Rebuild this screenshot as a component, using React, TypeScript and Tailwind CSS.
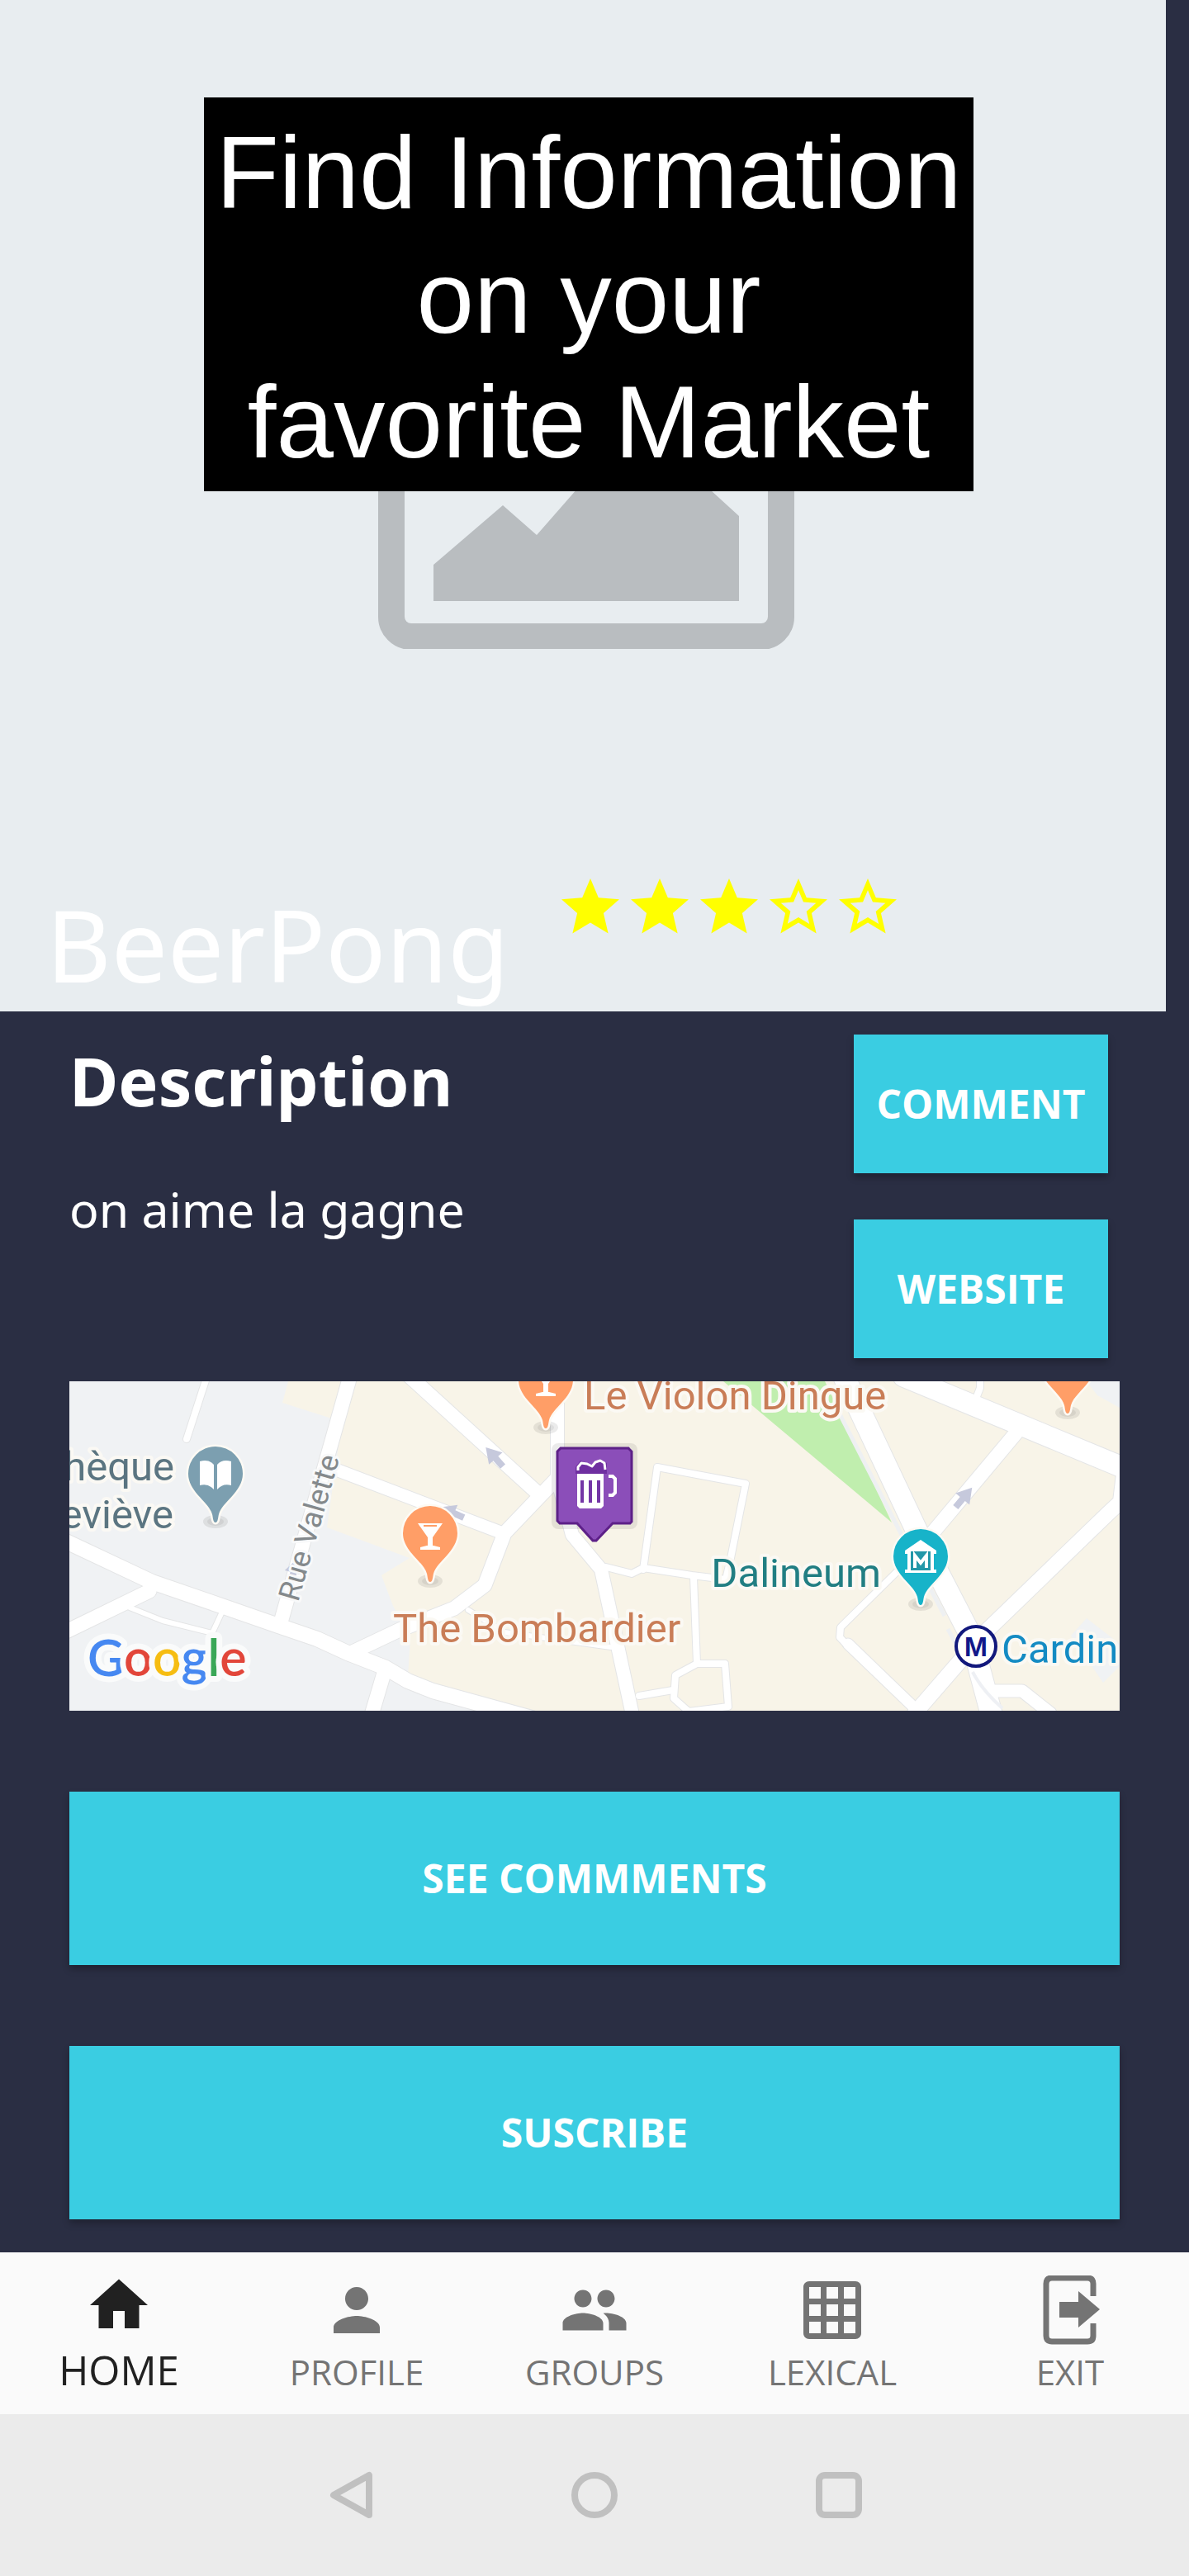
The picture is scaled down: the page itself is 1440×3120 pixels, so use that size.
import React from "react";
import {
  MdStar,
  MdStarBorder,
  MdHome,
  MdPerson,
  MdPeople,
  MdGridOn,
} from "react-icons/md";

const ROADS: { d: string; w: number }[] = [
  { d: "M166 -4 L142 70", w: 8 },
  { d: "M73 274 L113 290 L173 305 L187 275", w: 6 },
  { d: "M483 277 L527 304 L656 322", w: 6 },
  { d: "M695 228 L712 104 L819 124 L801 214 L795 240 L754 235 L695 226 L681 233 L650 225", w: 8 },
  { d: "M756 237 L760 342 L794 342 L798 394 L750 400 L732 384 L734 356 L760 342", w: 8 },
  { d: "M690 381 L731 374", w: 8 },
  { d: "M1003 230 L934 298 L933 310 L946 324", w: 8 },
  { d: "M943 318 L1024 396", w: 13 },
  { d: "M1103 -4 L1103 8 L1096 26", w: 8 },
  { d: "M340 -6 L256 292", w: 17 },
  { d: "M-6 304 L97 254", w: 17 },
  { d: "M382 350 L366 404", w: 17 },
  { d: "M323 107 L525 184", w: 15 },
  { d: "M412 -6 L570 138", w: 17 },
  { d: "M343 328 L400 301 L466 275 L503 247 L527 184 L570 139 L596 112", w: 17 },
  { d: "M591 -4 L591 118 L609 186 L644 228 L682 404", w: 16 },
  { d: "M-6 193 L100 243 L187 273 L256 297 L300 312 L337 329 L383 347 L410 363 L440 375 L560 408", w: 18 },
  { d: "M1147 62 L1045 184", w: 17 },
  { d: "M1278 104 L1273 146 L1258 160 L1108 305 L1024 402", w: 18 },
  { d: "M1110 375 L1154 375 L1188 402", w: 15 },
  { d: "M1010 -6 L1280 106", w: 25 },
  { d: "M938 -6 L1029 187 L1091 307 L1117 404", w: 26 },
];

function Pin({ x, y, color, children }: { x: number; y: number; color: string; children?: React.ReactNode }) {
  return (
    <g transform={`translate(${x} ${y})`}>
      <ellipse cx="0" cy="0" rx="15" ry="8" fill="#000" opacity="0.08" />
      <ellipse cx="0" cy="0" rx="10" ry="5" fill="#000" opacity="0.06" />
      <path
        d="M0 1 C-3 1 -3 -5 -4 -9 C-8 -24 -33 -36 -33 -58 A33 33 0 1 1 33 -58 C33 -36 8 -24 4 -9 C3 -5 3 1 0 1 Z"
        fill={color}
        stroke="#fdfaf4"
        strokeWidth="5"
        strokeLinejoin="round"
        style={{ paintOrder: "stroke" }}
      />
      {children}
    </g>
  );
}

function Martini() {
  return (
    <g>
      <path d="M-15 -70 H15 L3 -53 V-41 H-3 V-53 Z" fill="#fff" />
      <path d="M-8 -67 H8" stroke="#ff9e67" strokeWidth="2" />
      <path d="M-12 -38 V-41 L-4 -43 H4 L12 -41 V-38 Z" fill="#fff" />
    </g>
  );
}

function MapLabel({ x, y, fill, anchor = "start", children }: { x: number; y: number; fill: string; anchor?: "start" | "end"; children: string }) {
  return (
    <text
      x={x}
      y={y}
      fill={fill}
      textAnchor={anchor}
      className="font-[Roboto,sans-serif] text-[49px]"
      stroke="#fbf9f4"
      strokeWidth="8"
      strokeLinejoin="round"
      style={{ paintOrder: "stroke" }}
    >
      {children}
    </text>
  );
}

function DirectionArrow({ x, y, angle }: { x: number; y: number; angle: number }) {
  return (
    <path
      transform={`translate(${x} ${y}) rotate(${angle})`}
      d="M0 -16 L11 2 H4 V15 H-4 V2 H-11 Z"
      fill="#c6c9dc"
    />
  );
}

function VenueMap() {
  return (
    <svg viewBox="0 0 1272 399" preserveAspectRatio="xMidYMid slice" role="img" aria-label="Map around BeerPong" className="block w-full">
      <rect width="1272" height="399" fill="#f0f2f4" />
      <path d="M265 0 L258 26 L330 49 L312 177 L412 214 L378 235 L392 272 L413 310 L410 358 L540 399 H1272 V0 Z" fill="#f8f4e8" />
      <path d="M1232 0 H1272 V32 L1245 17 Z M1232 287 L1213 308 L1252 365 L1272 345 V318 Z" fill="#f0f2f4" />
      <path d="M792 0 H915 L940 52 L996 171 Z" fill="#c0eeae" />
      <path d="M928 30 L1010 190 M1042 250 L1060 284 M1064 300 L1080 330" stroke="#eef0f2" strokeWidth="5" fill="none" />
      <g fill="none" stroke="#e4e5e6" strokeLinejoin="round" strokeLinecap="round">
        {ROADS.map((r) => (
          <path key={r.d} d={r.d} strokeWidth={r.w + 2} />
        ))}
      </g>
      <g fill="none" stroke="#ffffff" strokeLinejoin="round" strokeLinecap="round">
        {ROADS.map((r) => (
          <path key={r.d} d={r.d} strokeWidth={r.w} />
        ))}
      </g>
      <path d="M1094 352 C1102 368 1112 380 1130 396" stroke="#eef0f4" strokeWidth="4" fill="none" />
      <DirectionArrow x={515} y={92} angle={-42} />
      <DirectionArrow x={464} y={159} angle={-66} />
      <DirectionArrow x={272} y={230} angle={16} />
      <DirectionArrow x={1083} y={141} angle={40} />

      <Pin x={577} y={56} color="#ff9e67"><Martini /></Pin>
      <Pin x={1209} y={38} color="#ff9e67" />
      <Pin x={437} y={242} color="#ff9e67"><Martini /></Pin>
      <Pin x={177} y={170} color="#7c9fb0">
        <path d="M-19 -73 Q-8 -76 -2 -69 V-39 Q-9 -47 -19 -44 Z M19 -73 Q8 -76 2 -69 V-39 Q9 -47 19 -44 Z" fill="#fff" />
      </Pin>
      <Pin x={1031} y={270} color="#17b3c9">
        <path d="M0 -78 L19 -65 V-61 H16 V-42 H19 V-38 H-19 V-42 H-16 V-61 H-19 V-65 Z" fill="#fff" />
        <rect x="-12" y="-64" width="24" height="23" fill="#2397a8" />
        <path d="M-7 -44 V-59 L0 -50 L7 -59 V-44" fill="none" stroke="#fff" strokeWidth="4" />
      </Pin>

      <MapLabel x={623} y={34} fill="#c97d57">Le Violon Dingue</MapLabel>
      <MapLabel x={392} y={316} fill="#c97d57">The Bombardier</MapLabel>
      <MapLabel x={983} y={249} fill="#217e83" anchor="end">Dalineum</MapLabel>
      <MapLabel x={127} y={120} fill="#5b7581" anchor="end">hèque</MapLabel>
      <MapLabel x={126} y={178} fill="#5b7581" anchor="end">eviève</MapLabel>
      <MapLabel x={1129} y={341} fill="#148bc3">Cardin</MapLabel>
      <text
        transform="translate(277 268) rotate(-74)"
        fill="#84898c"
        className="font-[Roboto,sans-serif] text-[36px]"
        stroke="#f8f9fa"
        strokeWidth="6"
        strokeLinejoin="round"
        style={{ paintOrder: "stroke" }}
      >
        Rue Valette
      </text>

      <circle cx="1098" cy="321" r="24" fill="#fff" stroke="#12187c" strokeWidth="4" />
      <text x="1098" y="333" textAnchor="middle" fill="#12188a" className="font-['Liberation_Sans',sans-serif] text-[34px] font-bold">M</text>

      <rect x="584" y="75" width="104" height="104" rx="8" fill="#000" opacity="0.08" />
      <path
        d="M595 81 H677 L681 85 V170 L679 172 H658 L638 193 H634 L615 172 H594 L591 169 V85 Z"
        fill="#8b4eb9"
        stroke="#5d2088"
        strokeWidth="3"
      />
      <path d="M613 112 V104 L619 96 L627 99 L633 102 L643 94 L651 99 L651 112 Z" fill="#6f2fa0" />
      <path d="M616 108 V104 L620 99 L627 100 L633 103 L637 98 L643 96 L648 99 L649 107" fill="none" stroke="#fff" strokeWidth="3" strokeLinejoin="round" />
      <path d="M615 112 H647 V151 L644 154 H618 L615 151 Z" fill="#fff" />
      <path d="M621 120 V147 M631 120 V147 M641 120 V147" stroke="#7436a6" strokeWidth="4" />
      <path d="M653 115 H658 L661 118 V135 L658 138 H653" fill="none" stroke="#fff" strokeWidth="4" />

      <text
        x="22"
        y="357"
        className="font-[Lato,sans-serif] text-[61px] font-semibold"
        stroke="#fafbfb"
        strokeWidth="14"
        strokeLinejoin="round"
        style={{ paintOrder: "stroke" }}
      >
        <tspan fill="#4688f1">G</tspan>
        <tspan fill="#e2463a">o</tspan>
        <tspan fill="#f6bd12">o</tspan>
        <tspan fill="#4688f1">g</tspan>
        <tspan fill="#3aa757">l</tspan>
        <tspan fill="#e2463a">e</tspan>
      </text>
    </svg>
  );
}

function ExitIcon() {
  return (
    <svg viewBox="0 0 84 84" className="size-[84px]" fill="currentColor" aria-hidden="true">
      <path
        d="M70 25 V10 Q70 3 63 3 H20 Q13 3 13 10 V73 Q13 80 20 80 H63 Q70 80 70 73 V58"
        fill="none"
        stroke="currentColor"
        strokeWidth="7"
      />
      <path d="M29 32 H52 V19 L78 41 L52 63 V51 H29 Z" />
    </svg>
  );
}

function ActionButton({ children, size }: { children: string; size: "small" | "wide" }) {
  return (
    <button
      type="button"
      className={
        "bg-[#3acde2] text-center text-[48px] leading-[66px] font-bold text-white shadow-[0_5px_8px_rgba(0,0,0,0.25)] " +
        (size === "small" ? "h-[168px] w-[308px]" : "h-[210px] w-full")
      }
    >
      {children}
    </button>
  );
}

const TABS: { label: string; icon: React.ReactNode }[] = [
  { label: "PROFILE", icon: <MdPerson className="size-[84px]" /> },
  { label: "GROUPS", icon: <MdPeople className="size-[84px]" /> },
  { label: "LEXICAL", icon: <MdGridOn className="size-[84px]" /> },
  { label: "EXIT", icon: <ExitIcon /> },
];

export default function App() {
  return (
    <div className="flex w-full flex-col bg-[#2a2e43] font-['Noto_Sans',sans-serif]">
      <header className="relative mr-7 flex min-h-[1225px] flex-col justify-between bg-[#e8edf0] pt-[118px]">
        <div className="absolute inset-x-0 top-[386px] flex justify-center pl-2">
          <svg viewBox="0 0 504 400" className="w-[504px]" aria-hidden="true">
            <rect x="16" y="16" width="472" height="369" rx="24" fill="none" stroke="#b9bdc0" strokeWidth="32" />
            <path d="M67 342 V298 L151 226 L192 262 L312 125 L437 239 V342 Z" fill="#b9bdc0" />
          </svg>
        </div>
        <div className="relative flex justify-center pl-3.5">
          <h1 className="bg-black px-3.5 pt-[15px] pb-[9px] text-center font-['Liberation_Sans',sans-serif] text-[125px] leading-[151px] text-white">
            Find Information
            <br />
            on your
            <br />
            favorite Market
          </h1>
        </div>
        <div className="relative flex items-start pl-14">
          <p className="mt-[5px] w-[617px] text-[121px] leading-[163px] text-white">BeerPong</p>
          <div role="img" aria-label="3 out of 5 stars" className="flex text-[#ffff00]">
            {[1, 2, 3, 4, 5].map((n) =>
              n <= 3 ? <MdStar key={n} className="size-[84px]" /> : <MdStarBorder key={n} className="size-[84px]" />
            )}
          </div>
        </div>
      </header>

      <main className="px-[84px] pt-7 pb-10">
        <div className="flex justify-between pr-3.5">
          <div>
            <h2 className="text-[81px] leading-[112px] font-bold text-white">Description</h2>
            <p className="mt-[58px] text-[59px] leading-[82px] text-white">on aime la gagne</p>
          </div>
          <div className="flex flex-col gap-14 font-['Open_Sans',sans-serif]">
            <ActionButton size="small">COMMENT</ActionButton>
            <ActionButton size="small">WEBSITE</ActionButton>
          </div>
        </div>
        <div className="mt-7">
          <VenueMap />
        </div>
        <div className="mt-[98px] flex flex-col gap-[98px] font-['Open_Sans',sans-serif]">
          <ActionButton size="wide">SEE COMMMENTS</ActionButton>
          <ActionButton size="wide">SUSCRIBE</ActionButton>
        </div>
      </main>

      <nav className="grid h-[196px] grid-cols-5 bg-[#fafafa] font-['Open_Sans',sans-serif]">
        <a href="#home" aria-current="page" className="flex flex-col items-center pt-[22px] text-[#212121]">
          <MdHome className="size-[84px]" />
          <span className="mt-[3px] text-[49px] leading-[66px]">HOME</span>
        </a>
        {TABS.map((t) => (
          <a key={t.label} href={"#" + t.label.toLowerCase()} className="flex flex-col items-center pt-7 text-[#747474]">
            {t.icon}
            <span className="mt-1 text-[42px] leading-[57px]">{t.label}</span>
          </a>
        ))}
      </nav>

      <div className="flex h-[196px] items-center justify-center gap-[212px] bg-[#ebebeb] text-[#c0c0c0]">
        <button type="button" aria-label="Back">
          <svg viewBox="0 0 84 84" className="size-[84px]" fill="none" stroke="currentColor" strokeWidth="8" strokeLinejoin="round">
            <path d="M65 18 V66 L22 42 Z" />
          </svg>
        </button>
        <button type="button" aria-label="Home">
          <svg viewBox="0 0 84 84" className="size-[84px]" fill="none" stroke="currentColor" strokeWidth="8">
            <circle cx="42" cy="42" r="24" />
          </svg>
        </button>
        <button type="button" aria-label="Recent apps">
          <svg viewBox="0 0 84 84" className="size-[84px]" fill="none" stroke="currentColor" strokeWidth="8">
            <rect x="18" y="18" width="48" height="48" rx="7" />
          </svg>
        </button>
      </div>
    </div>
  );
}
